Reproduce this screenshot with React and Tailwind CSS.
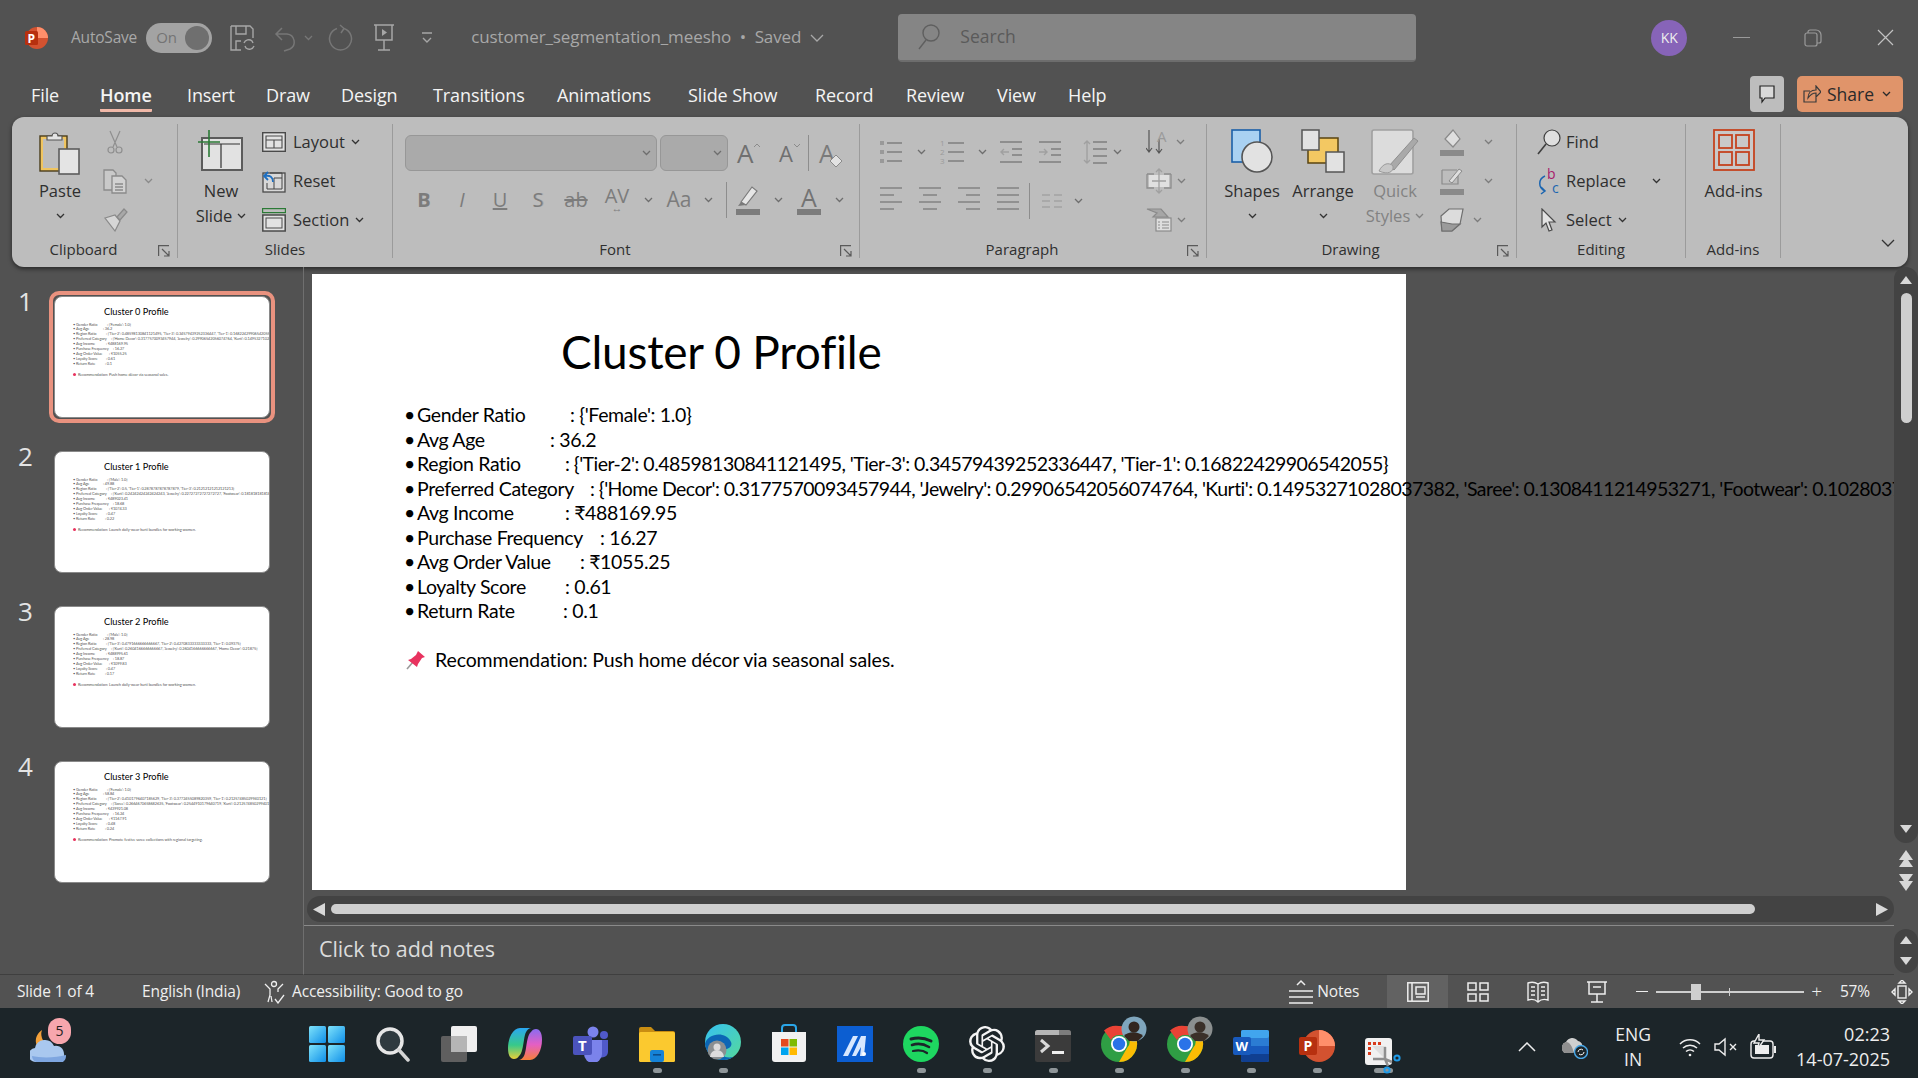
import React from 'react';
import { SiOpenai } from 'react-icons/si';

const UI = { fontFamily: '"Open Sans", "Noto Sans", sans-serif' };
const SLIDE_FONT = { fontFamily: 'Lato, "Noto Sans", sans-serif' };

const Chev = ({ className = 'stroke-[#4a4a4a]' }) => (
  <svg width="9" height="6" viewBox="0 0 9 6" fill="none" strokeWidth="1.3" className={`shrink-0 ${className}`}>
    <path d="M1 1l3.5 3.5L8 1" />
  </svg>
);

const Launcher = () => (
  <svg width="12" height="12" viewBox="0 0 12 12" fill="none" strokeWidth="1.2" className="absolute right-[7px] bottom-[1px] stroke-[#5a5a5a]">
    <path d="M.6 11V.6H11M4 4l7 7M11 6v5H6" />
  </svg>
);

// --- ribbon icons ---
const PasteIcon = () => (
  <svg width="42" height="46" viewBox="0 0 42 46">
    <rect x="1" y="7" width="27" height="35" fill="#f0c560" stroke="#4a3d1c" strokeWidth="1.4" />
    <rect x="4" y="10" width="21" height="29" fill="#bdbdbd" />
    <path d="M8 11V7h5a3 3 0 016 0h4v4z" fill="#e4e4e4" stroke="#555" strokeWidth="1.2" />
    <rect x="20" y="20" width="20" height="25" fill="#e4e4e4" stroke="#5c5c5c" strokeWidth="1.6" />
  </svg>
);
const CutIcon = () => (
  <svg width="18" height="24" viewBox="0 0 18 24" fill="none" stroke="#8f8f8f" strokeWidth="1.2">
    <path d="M4 1l7 16M14 1L7 17" />
    <circle cx="5" cy="20" r="3" /><circle cx="13" cy="20" r="3" />
  </svg>
);
const CopyIcon = () => (
  <svg width="25" height="25" viewBox="0 0 25 25" fill="#c9c9c9" stroke="#8a8a8a" strokeWidth="1.3">
    <path d="M1 1h9l3 3v17H1z" />
    <path d="M9 7h10l4 4v13H9z" fill="#d2d2d2" />
    <path d="M12 15h8M12 18h8M12 21h8" />
  </svg>
);
const BrushIcon = () => (
  <svg width="25" height="24" viewBox="0 0 25 24" fill="#d6d6d6" stroke="#8a8a8a" strokeWidth="1.2">
    <path d="M2 10l10-3 5 6-5 10z" />
    <path d="M14 9l7-8 3 3-7 8z" fill="#a8a8a8" />
  </svg>
);
const NewSlideIcon = () => (
  <svg width="46" height="42" viewBox="0 0 46 42">
    <rect x="4" y="9" width="40" height="32" fill="#e2e2e2" stroke="#5c5c5c" strokeWidth="2" />
    <path d="M6 15h36M23 15v24" stroke="#333" strokeWidth="1.2" fill="none" />
    <path d="M0 13h22M11 1v27" stroke="#2b7a36" strokeWidth="1.6" fill="none" />
  </svg>
);
const LayoutIcon = () => (
  <svg width="24" height="20" viewBox="0 0 24 20" fill="#e2e2e2" stroke="#4a4a4a">
    <rect x=".7" y=".7" width="22.6" height="18.6" strokeWidth="1.4" />
    <path d="M4 4h16v12H4zM4 8h16M12 8v8" fill="none" strokeWidth="1.1" />
  </svg>
);
const ResetIcon = () => (
  <svg width="24" height="24" viewBox="0 0 24 24">
    <rect x="1" y="4" width="22" height="19" fill="#d8d8d8" stroke="#4a4a4a" strokeWidth="1.3" />
    <path d="M8 4h12v16H5v-6M12 9h8M12 9v11" fill="none" stroke="#444" strokeWidth="1" />
    <path d="M11 13c0-5-3-7-8-6M6 3L2 7l4 4" fill="none" stroke="#1f6fc0" strokeWidth="1.8" />
  </svg>
);
const SectionIcon = () => (
  <svg width="24" height="24" viewBox="0 0 24 24" fill="none">
    <rect x=".6" y=".6" width="22.8" height="4" stroke="#2b7a36" strokeWidth="1.2" />
    <rect x=".8" y="7" width="22.4" height="16" fill="#e2e2e2" stroke="#4a4a4a" strokeWidth="1.5" />
    <rect x="4" y="10" width="16" height="10" stroke="#4a4a4a" strokeWidth="1" />
  </svg>
);
const GrowA = ({ down }) => (
  <span className="flex items-start text-[#707070]">
    <span className={`${down ? 'text-[22px]' : 'text-[26px]'} leading-[28px]`}>A</span>
    <svg width="8" height="5" viewBox="0 0 8 5" fill="none" stroke="#8b8b8b" className="mt-[4px]">
      <path d={down ? 'M1 1l3 3 3-3' : 'M1 4l3-3 3 3'} />
    </svg>
  </span>
);
const ClearIcon = () => (
  <span className="flex items-end text-[#7a7a7a] text-[25px] leading-[28px]">
    A
    <svg width="14" height="14" viewBox="0 0 14 14" className="-ml-[6px]">
      <path d="M1 8l6-6 6 6-6 6z" fill="#e2e2e2" stroke="#8a8a8a" />
    </svg>
  </span>
);
const HighlightIcon = () => (
  <svg width="24" height="30" viewBox="0 0 24 30">
    <path d="M5 17L16 2l5 4-11 14z" fill="#e6e6e6" stroke="#7a7a7a" strokeWidth="1.2" />
    <path d="M2 21l3-4 5 3z" fill="#7a7a7a" />
    <rect y="24" width="24" height="6" fill="#7c7c7c" />
  </svg>
);
const FontColorIcon = () => (
  <span className="flex flex-col items-center text-[#737373] text-[25px] leading-[24px]">
    A
    <span className="w-[24px] h-[6px] bg-[#7c7c7c]" />
  </span>
);
const Lines = ({ rows, w = 22, stroke = '#7f7f7f' }) => (
  <svg width={w} height={rows.length * 7 + 2} viewBox={`0 0 ${w} ${rows.length * 7 + 2}`} fill="none" stroke={stroke} strokeWidth="1.4">
    {rows.map(([a, b], i) => <path key={i} d={`M${a} ${i * 7 + 2}H${b}`} />)}
  </svg>
);
const BulletsIcon = () => (
  <svg width="22" height="24" viewBox="0 0 22 24" fill="none" stroke="#7f7f7f" strokeWidth="1.4">
    <path d="M0 3h4M0 12h4M0 21h4" strokeWidth="4" stroke="#999" />
    <path d="M7 3h15M7 12h15M7 21h15" />
  </svg>
);
const NumbersIcon = () => (
  <svg width="24" height="26" viewBox="0 0 24 26" fill="none" stroke="#7f7f7f" strokeWidth="1.4">
    <path d="M8 4h16M8 13h16M8 22h16" />
    <text x="0" y="7" fontSize="8" fill="#9a9a9a" stroke="none">1</text>
    <text x="0" y="16" fontSize="8" fill="#9a9a9a" stroke="none">2</text>
    <text x="0" y="25" fontSize="8" fill="#9a9a9a" stroke="none">3</text>
  </svg>
);
const IndentIcon = ({ out }) => (
  <svg width="22" height="24" viewBox="0 0 22 24" fill="none" stroke="#7f7f7f" strokeWidth="1.4">
    <path d="M0 2h22M12 9h10M12 15h10M0 22h22" />
    <path d={out ? 'M9 12H1m3-3l-3 3 3 3' : 'M0 12h8m-3-3l3 3-3 3'} stroke="#a0a0a0" />
  </svg>
);
const SpacingIcon = () => (
  <svg width="24" height="26" viewBox="0 0 24 26" fill="none" stroke="#7f7f7f" strokeWidth="1.4">
    <path d="M10 3h14M10 10h14M10 17h14M10 24h14" />
    <path d="M4 2v22M1 5l3-3 3 3M1 21l3 3 3-3" stroke="#a0a0a0" />
  </svg>
);
const TextDirIcon = () => (
  <svg width="24" height="26" viewBox="0 0 24 26" fill="none" stroke="#8a8a8a" strokeWidth="1.2">
    <path d="M3 1v22M0 19l3 4 3-4M13 10v14M10 20l3 4 3-4" stroke="#555" />
    <text x="11" y="13" fontSize="15" fill="#9a9a9a" stroke="none">A</text>
  </svg>
);
const AlignTextIcon = () => (
  <svg width="26" height="26" viewBox="0 0 26 26" fill="none">
    <path d="M1 6h7M18 6h7M1 6v14h7M25 6v14h-7" stroke="#8d8d8d" strokeWidth="1.3" />
    <rect x="3" y="7" width="20" height="12" fill="#e0e0e0" />
    <path d="M6 13h14M13 1v24M10 4l3-3 3 3M10 22l3 3 3-3" stroke="#a0a0a0" strokeWidth="1.3" />
  </svg>
);
const ColumnsIcon = () => (
  <svg width="20" height="14" viewBox="0 0 20 14" stroke="#a3a3a3" strokeWidth="1.3" fill="none">
    <path d="M0 1h8M12 1h8M0 7h8M12 7h8M0 13h8M12 13h8" />
  </svg>
);
const SmartArtIcon = () => (
  <svg width="26" height="24" viewBox="0 0 26 24" fill="none" stroke="#8a8a8a" strokeWidth="1.2">
    <path d="M1 1h14l7 8H7l4-4z" fill="#a6a6a6" />
    <rect x="10" y="10" width="15" height="13" fill="#dedede" />
    <path d="M12 14h2M16 14h7M12 17h2M16 17h7M12 20h2M16 20h7" />
  </svg>
);
const ShapesIcon = () => (
  <svg width="42" height="44" viewBox="0 0 42 44">
    <rect x="1" y="1" width="28" height="32" fill="#a9d1f2" stroke="#1b5fa8" strokeWidth="1.6" />
    <ellipse cx="26" cy="28" rx="15" ry="15" fill="#e2e2e2" stroke="#555" strokeWidth="1.6" />
  </svg>
);
const ArrangeIcon = () => (
  <svg width="44" height="44" viewBox="0 0 44 44" stroke="#555" strokeWidth="1.5">
    <rect x="7" y="9" width="30" height="25" fill="#f3c862" stroke="#5a4410" />
    <rect x="1" y="1" width="17" height="20" fill="#e2e2e2" />
    <rect x="25" y="23" width="18" height="20" fill="#e2e2e2" />
  </svg>
);
const QuickStylesIcon = () => (
  <svg width="48" height="48" viewBox="0 0 48 48" fill="none">
    <rect x="1" y="1" width="41" height="44" rx="2" fill="#dcdcdc" stroke="#a0a0a0" strokeWidth="1.6" />
    <path d="M18 37L43 9l4 3-24 29z" fill="#a9a9a9" stroke="#8f8f8f" />
    <path d="M8 42c4-8 10-9 14-5 1 6-5 9-14 5z" fill="#c8c8c8" stroke="#9a9a9a" />
  </svg>
);
const FillIcon = () => (
  <svg width="24" height="28" viewBox="0 0 24 28">
    <path d="M5 11l8-9 7 9-7 8z" fill="#dedede" stroke="#8a8a8a" strokeWidth="1.2" />
    <rect y="22" width="24" height="6" fill="#8a8a8a" />
  </svg>
);
const OutlineIcon = () => (
  <svg width="24" height="28" viewBox="0 0 24 28">
    <path d="M2 3h15M2 3v14h16V8" fill="none" stroke="#8a8a8a" strokeWidth="1.2" />
    <path d="M9 14L19 2l3 2-10 12z" fill="#dedede" stroke="#8a8a8a" />
    <rect y="22" width="24" height="6" fill="#8a8a8a" />
  </svg>
);
const EffectsIcon = () => (
  <svg width="24" height="24" viewBox="0 0 24 24" stroke="#6e6e6e" strokeWidth="1.2">
    <path d="M1 8l8-7h14l-3 15-8 7H2z" fill="#dcdcdc" />
    <path d="M1 14l11 2 8 0-8 7H2z" fill="#9b9b9b" />
  </svg>
);
const FindIcon = () => (
  <svg width="24" height="26" viewBox="0 0 24 26" fill="none" stroke="#3f3f3f" strokeWidth="1.2">
    <circle cx="15" cy="9" r="8" fill="#dfdfdf" />
    <path d="M9 15L1 25" strokeWidth="1.6" />
  </svg>
);
const ReplaceIcon = () => (
  <svg width="24" height="28" viewBox="0 0 24 28" fill="none">
    <text x="10" y="12" fontSize="14" fill="#a81a6b">b</text>
    <text x="15" y="26" fontSize="14" fill="#1b65b0">c</text>
    <path d="M8 9C1 12 1 21 8 24M4 20l4 4-4 3" stroke="#1b65b0" strokeWidth="1.5" />
  </svg>
);
const SelectIcon = () => (
  <svg width="18" height="24" viewBox="0 0 18 24">
    <path d="M2 1v18l4-4 3 8 3-1-3-8h6z" fill="#e2e2e2" stroke="#4a4a4a" strokeWidth="1.2" />
  </svg>
);
const AddInsIcon = () => (
  <svg width="42" height="42" viewBox="0 0 42 42" fill="none" stroke="#c5431f" strokeWidth="1.8">
    <rect x="1" y="1" width="40" height="40" fill="#c9c9c9" />
    <rect x="6" y="6" width="13" height="13" />
    <rect x="23" y="6" width="13" height="13" />
    <rect x="6" y="23" width="13" height="13" />
    <rect x="23" y="23" width="13" height="13" />
  </svg>
);

// --- title bar icons ---
const PptLogo = () => (
  <svg width="24" height="26" viewBox="0 0 24 26">
    <circle cx="13" cy="13" r="11" fill="#d35230" />
    <path d="M13 2a11 11 0 0111 11H13z" fill="#ff8f6b" />
    <rect x="1" y="6" width="13" height="14" rx="1.5" fill="#b7300f" />
    <text x="3.5" y="17.5" fontSize="12" fontWeight="700" fill="#fff" fontFamily="Open Sans">P</text>
  </svg>
);
const SaveSyncIcon = () => (
  <svg width="26" height="26" viewBox="0 0 26 26" fill="none" stroke="#a6a6a6" strokeWidth="1.4">
    <path d="M1 1h19l3 3v9M1 1v24h10M6 1v8h10V1M6 25v-9h5" />
    <path d="M14 18a5 5 0 018-2l1 2M24 21a5 5 0 01-8 2l-1-2" />
  </svg>
);
const UndoIcon = () => (
  <svg width="24" height="28" viewBox="0 0 24 28" fill="none" stroke="#777" strokeWidth="1.5">
    <path d="M2 10h11a8 8 0 013 15l-6 2M8 4l-6 6 6 6" />
  </svg>
);
const RedoIcon = () => (
  <svg width="26" height="28" viewBox="0 0 26 28" fill="none" stroke="#777" strokeWidth="1.5">
    <path d="M16 4.500a11 11 0 11-7 0M16 4.500l-4-3.500M16 4.500l-3 4.500" />
  </svg>
);
const PresentIcon = () => (
  <svg width="22" height="28" viewBox="0 0 22 28" fill="none" stroke="#a6a6a6" strokeWidth="1.5">
    <path d="M1 1h20M3 1v15h16V1M11 16v10M5 26h12" />
    <path d="M9 5l5 3.5L9 12z" fill="#a6a6a6" stroke="none" />
  </svg>
);

// --- status bar icons ---
const AccessIcon = () => (
  <svg width="22" height="24" viewBox="0 0 22 24" fill="none" stroke="#eee" strokeWidth="1.3">
    <circle cx="10" cy="4" r="2.5" />
    <path d="M1 4l5 5v6l-2 7M19 4l-5 5v3M8 22l-1-6M11 19l3 4 6-8" />
  </svg>
);
const NotesIcon = () => (
  <svg width="24" height="26" viewBox="0 0 24 26" fill="none" stroke="#eee" strokeWidth="1.5">
    <path d="M8 6l4-4 4 4M0 12h24M0 18h24M0 24h24" />
  </svg>
);
const NormalViewIcon = () => (
  <svg width="22" height="20" viewBox="0 0 22 20" fill="none" stroke="#eee" strokeWidth="1.5">
    <rect x=".8" y=".8" width="20.4" height="18.4" />
    <path d="M5 1v18M9 5h9v7H9zM9 15h9" />
  </svg>
);
const SorterIcon = () => (
  <svg width="22" height="20" viewBox="0 0 22 20" fill="none" stroke="#eee" strokeWidth="1.5">
    <rect x="1" y="1" width="8" height="7" /><rect x="13" y="1" width="8" height="7" />
    <rect x="1" y="12" width="8" height="7" /><rect x="13" y="12" width="8" height="7" />
  </svg>
);
const ReadingIcon = () => (
  <svg width="22" height="22" viewBox="0 0 22 22" fill="none" stroke="#eee" strokeWidth="1.4">
    <path d="M11 3C8 1 4 1 1 2v17c3-1 7-1 10 2 3-3 7-3 10-2V2c-3-1-7-1-10 1zM11 3v18M4 6h4M4 10h4M4 14h4M14 6h4M14 10h4M14 14h4" />
  </svg>
);
const ShowIcon = () => (
  <svg width="20" height="22" viewBox="0 0 20 22" fill="none" stroke="#eee" strokeWidth="1.5">
    <path d="M0 1h20M2 1v12h16V1M10 13v8M4 21h12M6 6h8" />
  </svg>
);
const FitIcon = () => (
  <svg width="22" height="24" viewBox="0 0 22 24" fill="none" stroke="#eee" strokeWidth="1.4">
    <rect x="7" y="6" width="8" height="12" />
    <path d="M11 0l-3 3h6zM11 24l-3-3h6zM1 12l3-3v6zM21 12l-3-3v6z" />
  </svg>
);

// --- taskbar icons ---
const Weather = () => (
  <svg width="42" height="44" viewBox="0 0 42 44">
    <path d="M12 8a12 12 0 0010 16l-8 6C4 26 3 14 12 8z" fill="#f4a13a" />
    <path d="M6 40a7 7 0 01-1-14 10 10 0 0119-2 8 8 0 0110 8 8 8 0 01-2 8z" fill="#a9c8ef" />
    <path d="M6 40a7 7 0 01-4-6c8 2 24 2 34-1a8 8 0 01-3 7z" fill="#7ea6e0" />
  </svg>
);
const WinIcon = () => (
  <svg width="36" height="36" viewBox="0 0 36 36">
    <defs>
      <linearGradient id="win" x1="0" y1="0" x2="1" y2="1">
        <stop offset="0" stopColor="#7fe3fb" /><stop offset="1" stopColor="#0f8fe8" />
      </linearGradient>
    </defs>
    <rect width="17" height="17" x="0" y="0" rx="1.5" fill="url(#win)" />
    <rect width="17" height="17" x="19" y="0" rx="1.5" fill="url(#win)" />
    <rect width="17" height="17" x="0" y="19" rx="1.5" fill="url(#win)" />
    <rect width="17" height="17" x="19" y="19" rx="1.5" fill="url(#win)" />
  </svg>
);
const SearchTask = () => (
  <svg width="36" height="36" viewBox="0 0 36 36" fill="none">
    <circle cx="15" cy="15" r="12" stroke="#e6e6e6" strokeWidth="3.5" fill="#2f3a3f" />
    <path d="M24 24l9 10" stroke="#d5d5d5" strokeWidth="3.5" strokeLinecap="round" />
  </svg>
);
const TaskView = () => (
  <svg width="36" height="36" viewBox="0 0 36 36">
    <rect x="0" y="10" width="26" height="26" rx="2" fill="#5f5f5f" />
    <rect x="10" y="0" width="26" height="26" rx="2" fill="#efefef" />
    <rect x="10" y="10" width="16" height="16" fill="#b5b5b5" />
  </svg>
);
const Copilot = () => (
  <svg width="36" height="36" viewBox="0 0 36 36">
    <defs>
      <linearGradient id="cop1" x1="0.5" y1="0" x2="0.5" y2="1">
        <stop offset="0" stopColor="#2aa7f2" /><stop offset="0.55" stopColor="#37c98a" /><stop offset="1" stopColor="#e9d038" />
      </linearGradient>
      <linearGradient id="cop2" x1="0.5" y1="0" x2="0.5" y2="1">
        <stop offset="0" stopColor="#8a6cf0" /><stop offset="0.5" stopColor="#e45fc4" /><stop offset="1" stopColor="#f5803a" />
      </linearGradient>
    </defs>
    <path d="M13 2h11c-5 1-6 6-7 12s-2 14-5 16c-1 2-3 3-5 3-4 0-6-4-6-11C1 12 6 2 13 2z" fill="url(#cop1)" />
    <path d="M23 34H12c5-1 6-6 7-12s2-14 5-16c1-2 3-3 5-3 4 0 6 4 6 11 0 10-5 20-12 20z" fill="url(#cop2)" />
  </svg>
);
const Teams = () => (
  <svg width="36" height="36" viewBox="0 0 36 36">
    <circle cx="20" cy="6" r="5.5" fill="#7b83eb" /><circle cx="31" cy="9" r="4" fill="#5059c9" />
    <path d="M25 14h10v12a6 6 0 01-10 4z" fill="#5059c9" />
    <path d="M11 14h18v14a9 9 0 01-18 0z" fill="#7b83eb" />
    <rect x="0" y="10" width="19" height="19" rx="2" fill="#4b53bc" />
    <text x="5" y="25" fontSize="15" fontWeight="700" fill="#fff" fontFamily="Open Sans">T</text>
  </svg>
);
const Explorer = () => (
  <svg width="36" height="36" viewBox="0 0 36 36">
    <path d="M0 3a2 2 0 012-2h10l4 4h18a2 2 0 012 2v6H0z" fill="#c98e12" />
    <rect y="6" width="36" height="30" rx="1.5" fill="#fbc92f" />
    <rect x="11" y="24" width="14" height="12" rx="2" fill="#1583d8" />
    <rect x="14" y="28" width="8" height="1.6" fill="#0c4d8a" />
  </svg>
);
const Edge = () => (
  <svg width="36" height="38" viewBox="0 0 36 38">
    <defs>
      <linearGradient id="edg" x1="0" y1="0" x2="1" y2="1"><stop offset="0" stopColor="#35c1f1" /><stop offset="1" stopColor="#55d99b" /></linearGradient>
    </defs>
    <circle cx="18" cy="18" r="18" fill="url(#edg)" />
    <path d="M0 20c2-10 20-14 26-2 2 5-3 8-10 8-1 4 3 9 12 7a18 18 0 01-28-13z" fill="#0c66b5" />
    <circle cx="12" cy="26" r="9.5" fill="#8a8f91" />
    <circle cx="12" cy="23" r="3.5" fill="#dcdcdc" />
    <path d="M5 33a7 7 0 0114 0z" fill="#dcdcdc" />
  </svg>
);
const Store = () => (
  <svg width="36" height="38" viewBox="0 0 36 38">
    <path d="M11 8V4a3 3 0 013-3h8a3 3 0 013 3v4" fill="none" stroke="#2aa6e8" strokeWidth="2" />
    <path d="M1 8h34v27a3 3 0 01-3 3H4a3 3 0 01-3-3z" fill="#f1f1f1" />
    <rect x="10" y="15" width="7.5" height="7.5" fill="#e5491f" /><rect x="18.5" y="15" width="7.5" height="7.5" fill="#7fba00" />
    <rect x="10" y="23.5" width="7.5" height="7.5" fill="#00a4ef" /><rect x="18.5" y="23.5" width="7.5" height="7.5" fill="#ffb900" />
  </svg>
);
const MApp = () => (
  <svg width="36" height="36" viewBox="0 0 36 36">
    <rect width="36" height="36" fill="#0c5ed1" />
    <path d="M6 30L16 10h5L11 30zM15 30l9-20h5l-2 20h-4l1-9-5 9z" fill="#d8e8ff" />
    <circle cx="27" cy="28" r="2" fill="#fff" />
  </svg>
);
const Spotify = () => (
  <svg width="36" height="36" viewBox="0 0 36 36" fill="none" stroke="#1c2529" strokeLinecap="round">
    <circle cx="18" cy="18" r="18" fill="#1ed760" stroke="none" />
    <path d="M8 13c7-2 14-1 20 2" strokeWidth="3" />
    <path d="M9 19c6-2 12-1 17 2" strokeWidth="2.6" />
    <path d="M10 25c5-1 10-1 14 2" strokeWidth="2.2" />
  </svg>
);
const Terminal = () => (
  <svg width="36" height="32" viewBox="0 0 36 32">
    <rect width="36" height="32" rx="2.5" fill="#3b3b3b" />
    <path d="M0 2.5A2.5 2.5 0 012.5 0H24v5H0z" fill="#b5b5b5" /><path d="M24 0h9.5A2.5 2.5 0 0136 2.500V5H24z" fill="#7d7d7d" />
    <path d="M6 10l7 6-7 6" stroke="#d8d8d8" strokeWidth="3" fill="none" />
    <rect x="17" y="21" width="12" height="3" fill="#eee" />
  </svg>
);
const Chrome = ({ avatar, avatarDark }) => (
  <svg width="46" height="46" viewBox="0 0 46 46">
    <g transform="translate(0 10)">
      <circle cx="18" cy="18" r="18" fill="#2f9e44" />
      <path d="M18 0a18 18 0 0115.6 9H18a9 9 0 00-8 5L3 4.500A18 18 0 0118 0z" fill="#ea4335" />
      <path d="M33.600 9A18 18 0 0118 36l8-14a9 9 0 000-13z" fill="#fbbc04" />
      <circle cx="18" cy="18" r="8" fill="#fff" />
      <circle cx="18" cy="18" r="6.200" fill="#2a73e8" />
    </g>
    <circle cx="33" cy="13" r="12.500" fill={avatar} />
    <circle cx="33" cy="11" r="5.500" fill={avatarDark} />
    <path d="M23 20c4-5 14-5 19 0l-5 5h-9z" fill={avatarDark} />
  </svg>
);
const Word = () => (
  <svg width="36" height="32" viewBox="0 0 36 32">
    <rect x="8" width="28" height="32" rx="2" fill="#2b7cd3" />
    <rect x="8" width="28" height="8" rx="2" fill="#41a5ee" />
    <rect x="8" y="16" width="28" height="8" fill="#185abd" />
    <path d="M8 24h28v6a2 2 0 01-2 2H10a2 2 0 01-2-2z" fill="#103f91" />
    <rect y="7" width="18" height="18" rx="2" fill="#185abd" />
    <text x="2.500" y="21" fontSize="13" fontWeight="700" fill="#fff" fontFamily="Open Sans">W</text>
  </svg>
);
const PptTask = () => (
  <svg width="36" height="32" viewBox="0 0 36 32">
    <circle cx="20" cy="16" r="16" fill="#d35230" />
    <path d="M20 0a16 16 0 0116 16H20z" fill="#ff8f6b" />
    <rect y="7" width="18" height="18" rx="2" fill="#b7300f" />
    <text x="4.500" y="21" fontSize="14" fontWeight="700" fill="#fff" fontFamily="Open Sans">P</text>
  </svg>
);
const Snip = () => (
  <svg width="38" height="38" viewBox="0 0 38 38" className="translate-y-[13px] relative z-10">
    <rect x="1" y="1" width="27" height="27" rx="3" fill="#f1f1f1" />
    <path d="M4 5h3v3H4zM9 5h3v3H9zM14 5h3v3h-3zM4 10h3v3H4zM4 15h3v3H4z" fill="#d83b1c" />
    <path d="M8 9h14v14" fill="#dfdfdf" />
    <path d="M9 22h12l7 3M21 10v12l3 7" stroke="#8f8f8f" strokeWidth="2.500" fill="none" />
    <circle cx="33" cy="21" r="2.600" fill="none" stroke="#1f9be8" strokeWidth="2" />
    <circle cx="23" cy="33" r="2.600" fill="none" stroke="#1f9be8" strokeWidth="2" />
  </svg>
);

// --- tray ---
const Wifi = () => (
  <svg width="22" height="20" viewBox="0 0 22 20" fill="none" stroke="#eee" strokeWidth="1.5">
    <path d="M1 7a14 14 0 0120 0M4 11a10 10 0 0114 0M7 14.500a6 6 0 018 0" />
    <circle cx="11" cy="18" r="1.300" fill="#eee" stroke="none" />
  </svg>
);
const Mute = () => (
  <svg width="24" height="20" viewBox="0 0 24 20" fill="none" stroke="#eee" strokeWidth="1.400">
    <path d="M1 7h4l6-5v16l-6-5H1zM16 7l6 6M22 7l-6 6" />
  </svg>
);
const Battery = () => (
  <svg width="28" height="26" viewBox="0 0 28 26" fill="none" stroke="#eee" strokeWidth="1.400">
    <rect x="1" y="7" width="22" height="17" rx="3" />
    <path d="M25 12v7" strokeWidth="2" />
    <rect x="5" y="11" width="14" height="9" fill="#eee" stroke="none" />
    <path d="M9 0L4 9h5l-2 7 7-10H9z" fill="#1c2529" />
  </svg>
);
const CloudSync = () => (
  <svg width="26" height="24" viewBox="0 0 26 24">
    <path d="M3 18a6 6 0 011-11 7 7 0 0112-1 6 6 0 013 10z" fill="#cfcfcf" />
    <path d="M3 18a6 6 0 011-11c4 0 6 4 8 11z" fill="#8f8f8f" />
    <circle cx="19" cy="17" r="6.500" fill="#1c2529" stroke="#4aa8e8" strokeWidth="1.400" />
    <path d="M16 17a3 3 0 015-2M22 17a3 3 0 01-5 2" stroke="#fff" fill="none" />
  </svg>
);

// --- slides ---
const rows = (gender, age, region, cat, income, freq, order, loyal, ret) => [
  ['Gender Ratio', 'w-[153px]', 'w-[31px]', `{'${gender}': 1.0}`],
  ['Avg Age', 'w-[133px]', 'w-[27px]', age],
  ['Region Ratio', 'w-[148px]', 'w-[30px]', region],
  ['Preferred Category', 'w-[173px]', 'w-[35px]', cat],
  ['Avg Income', 'w-[148px]', 'w-[30px]', income],
  ['Purchase Frequency', 'w-[183px]', 'w-[37px]', freq],
  ['Avg Order Value', 'w-[163px]', 'w-[33px]', order],
  ['Loyalty Score', 'w-[148px]', 'w-[30px]', loyal],
  ['Return Rate', 'w-[146px]', 'w-[29px]', ret],
];

const slides = [
  {
    title: 'Cluster 0 Profile',
    rows: rows('Female', '36.2', "{'Tier-2': 0.48598130841121495, 'Tier-3': 0.34579439252336447, 'Tier-1': 0.16822429906542055}", "{'Home Decor': 0.3177570093457944, 'Jewelry': 0.29906542056074764, 'Kurti': 0.14953271028037382, 'Saree': 0.1308411214953271, 'Footwear': 0.10280373831775701}", '₹488169.95', '16.27', '₹1055.25', '0.61', '0.1'),
    rec: 'Recommendation: Push home décor via seasonal sales.',
  },
  {
    title: 'Cluster 1 Profile',
    rows: rows('Male', '49.88', "{'Tier-2': 0.5, 'Tier-1': 0.2878787878787879, 'Tier-3': 0.21212121212121213}", "{'Kurti': 0.24242424242424243, 'Jewelry': 0.22727272727272727, 'Footwear': 0.18181818181818182}", '₹489023.41', '18.68', '₹1074.33', '0.47', '0.22'),
    rec: 'Recommendation: Launch daily-wear kurti bundles for working women.',
  },
  {
    title: 'Cluster 2 Profile',
    rows: rows('Male', '28.98', "{'Tier-3': 0.4791666666666667, 'Tier-2': 0.4270833333333333, 'Tier-1': 0.09375}", "{'Kurti': 0.2604166666666667, 'Jewelry': 0.2604166666666667, 'Home Decor': 0.21875}", '₹488995.61', '18.87', '₹1099.83', '0.47', '0.17'),
    rec: 'Recommendation: Launch daily-wear kurti bundles for working women.',
  },
  {
    title: 'Cluster 3 Profile',
    rows: rows('Female', '58.84', "{'Tier-2': 0.4101796407185629, 'Tier-3': 0.3772455089820359, 'Tier-1': 0.21257485029940121}", "{'Saree': 0.2664670658682635, 'Footwear': 0.2544910179640719, 'Kurti': 0.2125748502994012}", '₹439921.08', '16.24', '₹1167.91', '0.48', '0.24'),
    rec: 'Recommendation: Promote festive saree collections with regional targeting.',
  },
];

const Pin = ({ size = 20 }) => (
  <svg width={size} height={size} viewBox="0 0 20 20" className="shrink-0">
    <path d="M1 19l6-7" stroke="#9a9a9a" strokeWidth="1.600" />
    <path d="M12 1l7 6-3 1-4 6-1 3-9-7 3-1 5-4z" fill="#e8335f" />
  </svg>
);

const Thumb = ({ slide, n, active }) => (
  <div className="flex items-center h-[155px] shrink-0">
    <div className="w-[49px] pl-[18px] text-[26px] leading-none text-[#e4e4e4] -mt-[112px]" style={UI}>{n}</div>
    <div className={`rounded-[10px] ${active ? 'border-[4px] border-[#e9927f] p-[1px]' : 'p-[5px]'}`}>
      <div className="w-[216px] h-[122px] rounded-[8px] bg-white border border-[#8a8a8a] overflow-hidden text-[#555] whitespace-nowrap" style={SLIDE_FONT}>
        <div className="pl-[49px] pt-[9px] text-[9.2px] leading-[12px] text-black">{slide.title}</div>
        <div className="pl-[18px] pt-[5px] text-[3.9px] leading-[4.9px] tracking-[-0.1px]">
          {slide.rows.map(([label, , w2, value]) => (
            <div key={label} className="flex">
              <span className="w-[3px] shrink-0">•</span>
              <span className={`${w2} shrink-0`}>{label}</span>
              <span>: {value}</span>
            </div>
          ))}
        </div>
        <div className="pl-[18px] pt-[5px] text-[3.9px] leading-[5px] flex items-center gap-[2px] tracking-[-0.05px]">
          <span className="w-[3px] h-[3px] rounded-full bg-[#e8335f]" />{slide.rec}
        </div>
      </div>
    </div>
  </div>
);

const Slide = ({ slide }) => (
  <div className="w-[1094px] h-[616px] bg-white shrink-0 text-black whitespace-nowrap" style={SLIDE_FONT}>
    <div className="pl-[249px] pt-[50px] text-[46px] leading-[56px] tracking-[-0.25px]">{slide.title}</div>
    <div className="pl-[92px] pt-[23px] text-[19.5px] leading-[24.5px] tracking-[-0.35px]">
      {slide.rows.map(([label, w1, , value]) => (
        <div key={label} className="flex">
          <span className="w-[13px] shrink-0">•</span>
          <span className={`${w1} shrink-0`}>{label}</span>
          <span className={value.length > 40 ? 'tracking-[-0.53px]' : ''}>: {value}</span>
        </div>
      ))}
    </div>
    <div className="pl-[94px] pt-[24px] text-[19.5px] leading-[24.5px] tracking-[-0.12px] flex items-center gap-[9px]">
      <Pin />{slide.rec}
    </div>
  </div>
);

// --- ribbon parts ---
const Group = ({ w, label, launcher, children }) => (
  <div className={`${w} h-[134px] shrink-0 relative border-r border-[#9b9b9b] flex flex-col`}>
    <div className="h-[120px] flex">{children}</div>
    <div className={`h-[18px] leading-[18px] text-center text-[15px] text-[#2f2f2f] ${launcher ? 'pr-[22px]' : ''}`}>{label}</div>
    {launcher && <Launcher />}
  </div>
);

const BigBtn = ({ icon, lines, chev, w, dim, h = 'h-[54px]' }) => (
  <div className={`${w} shrink-0 flex flex-col items-center text-[16.5px] leading-[25px] ${dim ? 'text-[#828282]' : 'text-[#2f2f2f]'}`}>
    <div className={`${h} pt-[5px] flex items-start justify-center`}>{icon}</div>
    {lines.map((l, i) => (
      <div key={l} className="flex items-center gap-[5px]">
        {l}
        {chev && i === lines.length - 1 && <Chev className={dim ? 'stroke-[#828282]' : 'stroke-[#333]'} />}
      </div>
    ))}
  </div>
);

const BelowChev = ({ dim }) => (
  <div className="h-[25px] flex items-center"><Chev className={dim ? 'stroke-[#828282]' : 'stroke-[#333]'} /></div>
);

const SmallBtn = ({ icon, label, chev, iconW = 'w-[30px]' }) => (
  <div className="h-[36px] flex items-center text-[16.5px] text-[#2f2f2f]">
    <div className={`${iconW} flex justify-center shrink-0`}>{icon}</div>
    {label && <span className="ml-[4px]">{label}</span>}
    {chev && <span className="ml-[6px]"><Chev className="stroke-[#333]" /></span>}
  </div>
);

const Sep = () => <div className="w-px h-[36px] bg-[#8d8d8d] shrink-0" />;
const Combo = ({ w }) => (
  <div className={`${w} h-[36px] shrink-0 rounded-[6px] border border-[#979797] bg-[#aaaaaa] flex items-center justify-end pr-[5px]`}>
    <Chev className="stroke-[#6e6e6e]" />
  </div>
);
const Cell = ({ w, children }) => <div className={`${w} h-[36px] shrink-0 flex items-center justify-center`}>{children}</div>;

const Ribbon = () => (
  <div className="ml-[12px] mr-[10px] h-[150px] rounded-[12px] bg-[#bdbdbd] flex items-start pt-[7px] shadow-[0_2px_4px_rgba(0,0,0,0.5)] shrink-0">
    <Group w="w-[166px]" label="Clipboard" launcher>
      <div className="ml-[22px]">
        <BigBtn w="w-[52px]" icon={<PasteIcon />} lines={['Paste']} />
        <div className="flex justify-center"><BelowChev /></div>
      </div>
      <div className="ml-[14px] flex flex-col gap-[3px]">
        <Cell w="w-[30px]"><CutIcon /></Cell>
        <Cell w="w-[30px]"><CopyIcon /></Cell>
        <Cell w="w-[30px]"><BrushIcon /></Cell>
      </div>
      <div className="ml-[14px] mt-[54px]"><Chev className="stroke-[#8a8a8a]" /></div>
    </Group>

    <Group w="w-[215px]" label="Slides">
      <div className="ml-[12px]">
        <BigBtn w="w-[62px]" icon={<NewSlideIcon />} lines={['New', 'Slide']} chev />
      </div>
      <div className="ml-[7px] flex flex-col gap-[3px]">
        <SmallBtn icon={<LayoutIcon />} label="Layout" chev />
        <SmallBtn icon={<ResetIcon />} label="Reset" />
        <SmallBtn icon={<SectionIcon />} label="Section" chev />
      </div>
    </Group>

    <Group w="w-[467px]" label="Font" launcher>
      <div className="pl-[12px] pt-[11px] flex flex-col gap-[11px]">
        <div className="flex items-center">
          <Combo w="w-[252px]" />
          <div className="w-[3px]" />
          <Combo w="w-[68px]" />
          <div className="ml-[9px] w-[42px]"><GrowA /></div>
          <div className="w-[29px]"><GrowA down /></div>
          <Sep />
          <div className="ml-[10px]"><ClearIcon /></div>
        </div>
        <div className="flex items-center text-[#7c7c7c] text-[20px]">
          <Cell w="w-[38px]"><b>B</b></Cell>
          <Cell w="w-[38px]"><i>I</i></Cell>
          <Cell w="w-[38px]"><u>U</u></Cell>
          <Cell w="w-[38px]"><span className="[text-shadow:1px_0_0_#aaa]">S</span></Cell>
          <Cell w="w-[38px]"><span className="line-through">ab</span></Cell>
          <Cell w="w-[44px]">
            <span className="flex flex-col items-center leading-[16px] text-[20px]">AV<span className="text-[11px] leading-[8px]">↔</span></span>
          </Cell>
          <Cell w="w-[18px]"><Chev className="stroke-[#6e6e6e]" /></Cell>
          <Cell w="w-[44px]"><span className="text-[21px]">Aa</span></Cell>
          <Cell w="w-[14px]"><Chev className="stroke-[#6e6e6e]" /></Cell>
          <div className="ml-[11px]"><Sep /></div>
          <div className="ml-[9px]"><HighlightIcon /></div>
          <Cell w="w-[37px]"><Chev className="stroke-[#6e6e6e]" /></Cell>
          <FontColorIcon />
          <Cell w="w-[36px]"><Chev className="stroke-[#6e6e6e]" /></Cell>
        </div>
      </div>
    </Group>

    <Group w="w-[347px]" label="Paragraph" launcher>
      <div className="pl-[20px] pt-[10px] flex flex-col gap-[13px] w-[286px]">
        <div className="flex items-center h-[36px]">
          <BulletsIcon />
          <Cell w="w-[38px]"><Chev className="stroke-[#6e6e6e]" /></Cell>
          <NumbersIcon />
          <Cell w="w-[36px]"><Chev className="stroke-[#6e6e6e]" /></Cell>
          <IndentIcon out />
          <div className="w-[17px]" />
          <IndentIcon />
          <div className="w-[22px]" />
          <SpacingIcon />
          <Cell w="w-[21px]"><Chev className="stroke-[#6e6e6e]" /></Cell>
        </div>
        <div className="flex items-center h-[36px]">
          <Lines rows={[[0, 22], [0, 14], [0, 22], [0, 14]]} />
          <div className="w-[17px]" />
          <Lines rows={[[0, 22], [4, 18], [0, 22], [4, 18]]} />
          <div className="w-[17px]" />
          <Lines rows={[[0, 22], [8, 22], [0, 22], [8, 22]]} />
          <div className="w-[17px]" />
          <Lines rows={[[0, 22], [0, 22], [0, 22], [0, 22]]} />
          <div className="w-[10px]" />
          <Sep />
          <div className="ml-[12px]"><ColumnsIcon /></div>
          <Cell w="w-[32px]"><Chev className="stroke-[#6e6e6e]" /></Cell>
        </div>
      </div>
      <div className="flex flex-col gap-[3px]">
        <div className="h-[36px] flex items-center gap-[6px]"><TextDirIcon /><Chev className="stroke-[#7c7c7c]" /></div>
        <div className="h-[36px] flex items-center gap-[5px]"><AlignTextIcon /><Chev className="stroke-[#7c7c7c]" /></div>
        <div className="h-[36px] flex items-center gap-[5px]"><SmartArtIcon /><Chev className="stroke-[#7c7c7c]" /></div>
      </div>
    </Group>

    <Group w="w-[310px]" label="Drawing" launcher>
      <div className="ml-[15px]">
        <BigBtn w="w-[60px]" icon={<ShapesIcon />} lines={['Shapes']} />
        <div className="flex justify-center"><BelowChev /></div>
      </div>
      <div className="ml-[11px]">
        <BigBtn w="w-[60px]" icon={<ArrangeIcon />} lines={['Arrange']} />
        <div className="flex justify-center"><BelowChev /></div>
      </div>
      <div className="ml-[9px]">
        <BigBtn w="w-[66px]" icon={<QuickStylesIcon />} lines={['Quick', 'Styles']} chev dim />
      </div>
      <div className="ml-[12px] flex flex-col gap-[3px]">
        <div className="h-[36px] flex items-center gap-[20px]"><FillIcon /><Chev className="stroke-[#7c7c7c]" /></div>
        <div className="h-[36px] flex items-center gap-[20px]"><OutlineIcon /><Chev className="stroke-[#7c7c7c]" /></div>
        <div className="h-[36px] flex items-center gap-[9px]"><EffectsIcon /><Chev className="stroke-[#7c7c7c]" /></div>
      </div>
    </Group>

    <Group w="w-[169px]" label="Editing">
      <div className="ml-[19px] flex flex-col gap-[3px] w-[150px]">
        <SmallBtn icon={<FindIcon />} label="Find" iconW="w-[26px]" />
        <div className="flex items-center">
          <SmallBtn icon={<ReplaceIcon />} label="Replace" iconW="w-[26px]" />
          <span className="ml-[26px]"><Chev className="stroke-[#333]" /></span>
        </div>
        <SmallBtn icon={<SelectIcon />} label="Select" chev iconW="w-[26px]" />
      </div>
    </Group>

    <Group w="w-[95px]" label="Add-ins">
      <BigBtn w="w-[95px]" icon={<AddInsIcon />} lines={['Add-ins']} />
    </Group>

    <div className="flex-1 h-[134px] flex items-end justify-end pr-[13px] pb-[11px]">
      <svg width="14" height="8" viewBox="0 0 14 8" fill="none" stroke="#333" strokeWidth="1.3"><path d="M1 1l6 6 6-6" /></svg>
    </div>
  </div>
);

const menu = [
  ['File', 'w-[69px]'], ['Home', 'w-[87px]'], ['Insert', 'w-[79px]'], ['Draw', 'w-[75px]'], ['Design', 'w-[92px]'],
  ['Transitions', 'w-[124px]'], ['Animations', 'w-[131px]'], ['Slide Show', 'w-[127px]'], ['Record', 'w-[91px]'],
  ['Review', 'w-[91px]'], ['View', 'w-[71px]'], ['Help', 'w-[60px]'],
];

const TaskIcon = ({ children, dot, wide }) => (
  <div className="w-[66px] shrink-0 flex flex-col items-center">
    <div className="h-[40px] flex items-end justify-center">{children}</div>
    <div className={`${wide ? 'w-[19px]' : 'w-[9px]'} h-[5px] mt-[6px] rounded-full ${dot ? 'bg-[#8f9699]' : ''}`} />
  </div>
);

const ScrollArrow = ({ d, w = 12, h = 9 }) => (
  <svg width={w} height={h} viewBox={`0 0 ${w} ${h}`} className="fill-[#d8d8d8] shrink-0"><path d={d} /></svg>
);

export default function App() {
  return (
    <div className="w-[1918px] h-[1078px] flex flex-col bg-[#525252] overflow-hidden" style={UI}>
      {/* title bar */}
      <div className="h-[75px] flex items-center pl-[24px] shrink-0">
        <PptLogo />
        <span className="ml-[23px] text-[15.5px] text-[#a8a8a8] tracking-[-0.2px]">AutoSave</span>
        <div className="ml-[9px] w-[66px] h-[30px] rounded-full bg-[#a3a3a3] flex items-center justify-between pl-[10px] pr-[3px]">
          <span className="text-[15px] text-[#747474]">On</span>
          <span className="w-[24px] h-[24px] rounded-full bg-[#6f6f6f]" />
        </div>
        <div className="ml-[18px]"><SaveSyncIcon /></div>
        <div className="ml-[18px]"><UndoIcon /></div>
        <div className="ml-[6px]"><Chev className="stroke-[#777]" /></div>
        <div className="ml-[15px]"><RedoIcon /></div>
        <div className="ml-[19px]"><PresentIcon /></div>
        <svg width="12" height="12" viewBox="0 0 12 12" fill="none" stroke="#a6a6a6" strokeWidth="1.400" className="ml-[26px]"><path d="M1 1h10M2 6l4 4 4-4" /></svg>
        <span className="ml-[38px] -mt-[1px] text-[17px] text-[#a8a8a8] tracking-[-0.1px] whitespace-pre">customer_segmentation_meesho  •  Saved</span>
        <svg width="14" height="8" viewBox="0 0 14 8" fill="none" stroke="#a8a8a8" strokeWidth="1.300" className="ml-[9px]"><path d="M1 1l6 6 6-6" /></svg>
        <div className="ml-[74px] w-[518px] h-[48px] rounded-[4px] bg-[#858585] border-b-2 border-[#6d6d6d] flex items-center pl-[20px]">
          <svg width="22" height="26" viewBox="0 0 22 26" fill="none" stroke="#5f5f5f" strokeWidth="1.400"><circle cx="13" cy="9" r="8" /><path d="M8 16L1 25" /></svg>
          <span className="ml-[20px] text-[17.5px] text-[#5a5a5a]">Search</span>
        </div>
        <div className="ml-[235px] w-[36px] h-[36px] rounded-full bg-[#8764b8] flex items-center justify-center text-[14px] text-[#eee]">KK</div>
        <div className="ml-[46px] w-[17px] h-px bg-[#9a9a9a]" />
        <svg width="18" height="18" viewBox="0 0 18 18" fill="none" stroke="#9a9a9a" strokeWidth="1.200" className="ml-[54px]">
          <rect x="1" y="4" width="12" height="13" rx="2" /><path d="M4 4V3a2 2 0 012-2h6a5 5 0 015 5v6a2 2 0 01-2 2h-2" />
        </svg>
        <svg width="17" height="17" viewBox="0 0 17 17" fill="none" stroke="#c2c2c2" strokeWidth="1.200" className="ml-[55px]"><path d="M1 1l15 15M16 1L1 16" /></svg>
      </div>

      {/* menu row */}
      <div className="h-[42px] flex items-start pl-[31px] pr-[15px] shrink-0">
        {menu.map(([m, w]) => (
          <div key={m} className={`${w} shrink-0 h-[42px] pt-[7px] text-[18px] leading-[26px] tracking-[-0.1px] text-[#f4f4f4]`}>
            <span className={`inline-block ${m === 'Home' ? 'font-semibold border-b-[3px] border-[#f0b8a8] pb-[1px] rounded-b-[1px]' : ''}`}>{m}</span>
          </div>
        ))}
        <div className="flex-1" />
        <div className="w-[34px] h-[36px] mt-[1px] rounded-[4px] bg-[#bdbdbd] flex items-center justify-center">
          <svg width="16" height="19" viewBox="0 0 16 19" fill="#d9d9d9" stroke="#222" strokeWidth="1.200"><path d="M1 1h14v12H6l-3 4v-4H1z" /></svg>
        </div>
        <div className="ml-[13px] w-[106px] h-[36px] mt-[1px] rounded-[5px] bg-[#e0946a] flex items-center pl-[6px] text-[#2a2a2a] text-[17.5px]">
          <svg width="18" height="19" viewBox="0 0 18 19" fill="none" stroke="#3a3a3a" strokeWidth="1.200"><path d="M13 9v8H1V6h6M5 13c0-5 3-8 8-8V1l5 6-5 5V8c-4 0-6 2-8 5z" /></svg>
          <span className="ml-[6px]">Share</span>
          <span className="ml-[8px]"><Chev className="stroke-[#2a2a2a]" /></span>
        </div>
      </div>

      <Ribbon />

      {/* work area */}
      <div className="h-[658px] flex shrink-0">
        <div className="w-[304px] shrink-0 border-r border-[#6f6f6f] pt-[12px] flex flex-col">
          {slides.map((s, i) => <Thumb key={s.title} slide={s} n={i + 1} active={i === 0} />)}
        </div>
        <div className="flex-1 min-w-0 flex flex-col">
          <div className="h-[629px] pl-[8px] pt-[7px] overflow-hidden flex">
            <Slide slide={slides[0]} />
          </div>
          <div className="h-[26px] ml-[3px] rounded-full bg-[#434343] flex items-center px-[6px] gap-[6px]">
            <ScrollArrow d="M0 6.500L12 0v13z" h={13} />
            <div className="w-[1424px] h-[10px] rounded-full bg-[#cfcfcf]" />
            <div className="flex-1" />
            <ScrollArrow d="M12 6.500L0 0v13z" h={13} />
          </div>
        </div>
        <div className="w-[24px] shrink-0 flex flex-col items-center">
          <div className="w-[24px] h-[576px] rounded-[12px] bg-[#434343] flex flex-col items-center py-[9px]">
            <ScrollArrow d="M6 0l6 8H0z" />
            <div className="mt-[8px] w-[11px] h-[130px] rounded-full bg-[#cfcfcf]" />
            <div className="flex-1" />
            <ScrollArrow d="M6 8l6-8H0z" />
          </div>
          <div className="mt-[7px] flex flex-col items-center">
            <ScrollArrow d="M7 0l7 10H0z" w={14} h={10} /><div className="-mt-[3px]"><ScrollArrow d="M7 0l7 10H0z" w={14} h={10} /></div>
            <div className="h-[7px]" />
            <ScrollArrow d="M7 10l7-10H0z" w={14} h={10} /><div className="-mt-[3px]"><ScrollArrow d="M7 10l7-10H0z" w={14} h={10} /></div>
          </div>
        </div>
      </div>

      {/* notes */}
      <div className="h-[50px] flex shrink-0">
        <div className="w-[304px] shrink-0 border-r border-[#6f6f6f] border-b border-b-[#3f3f3f]" />
        <div className="flex-1 flex items-center border-t border-t-[#8a8a8a] border-b border-b-[#3f3f3f] pl-[15px] pb-[2px] text-[21.5px] text-[#dcdcdc] tracking-[-0.1px]">Click to add notes</div>
        <div className="w-[24px] mt-[4px] h-[44px] rounded-[12px] bg-[#434343] flex flex-col items-center justify-center gap-[12px]">
          <ScrollArrow d="M6 0l6 8H0z" />
          <ScrollArrow d="M6 8l6-8H0z" />
        </div>
      </div>

      {/* status bar */}
      <div className="h-[33px] flex items-center shrink-0 text-[15.5px] text-[#efefef] tracking-[-0.15px] whitespace-nowrap">
        <span className="ml-[17px]">Slide 1 of 4</span>
        <span className="ml-[48px]">English (India)</span>
        <span className="ml-[24px]"><AccessIcon /></span>
        <span className="ml-[6px]">Accessibility: Good to go</span>
        <div className="flex-1" />
        <NotesIcon />
        <span className="ml-[4px]">Notes</span>
        <div className="ml-[28px] w-[61px] h-[33px] bg-[#626262] flex items-center justify-center"><NormalViewIcon /></div>
        <div className="ml-[19px]"><SorterIcon /></div>
        <div className="ml-[38px]"><ReadingIcon /></div>
        <div className="ml-[38px]"><ShowIcon /></div>
        <div className="ml-[29px] w-[12px] h-px bg-[#eee]" />
        <div className="ml-[8px] w-[148px] h-[2px] bg-[#cfcfcf] flex items-center">
          <span className="ml-[35px] w-[10px] h-[16px] bg-[#cfcfcf]" />
          <span className="ml-[28px] w-px h-[8px] bg-[#cfcfcf]" />
        </div>
        <span className="ml-[7px] text-[19px] leading-none font-light">+</span>
        <span className="ml-[18px]">57%</span>
        <div className="ml-[21px] mr-[5px]"><FitIcon /></div>
      </div>

      {/* taskbar */}
      <div className="h-[70px] bg-[#1c2529] flex items-start pt-[14px] shrink-0">
        <div className="ml-[30px] w-[46px] relative">
          <Weather />
          <span className="absolute -top-[4px] left-[18px] w-[23px] h-[26px] rounded-full bg-[#f7a6ad] text-[#222] text-[14px] leading-[26px] text-center">5</span>
        </div>
        <div className="ml-[218px] flex">
          <TaskIcon><WinIcon /></TaskIcon>
          <TaskIcon><SearchTask /></TaskIcon>
          <TaskIcon><TaskView /></TaskIcon>
          <TaskIcon><Copilot /></TaskIcon>
          <TaskIcon><Teams /></TaskIcon>
          <TaskIcon dot><Explorer /></TaskIcon>
          <TaskIcon dot><Edge /></TaskIcon>
          <TaskIcon><Store /></TaskIcon>
          <TaskIcon><MApp /></TaskIcon>
          <TaskIcon dot><Spotify /></TaskIcon>
          <TaskIcon dot><SiOpenai size={36} className="text-[#f4f4f4]" /></TaskIcon>
          <TaskIcon dot><Terminal /></TaskIcon>
          <TaskIcon dot><span className="ml-[10px] block"><Chrome avatar="#7fa6bd" avatarDark="#33261f" /></span></TaskIcon>
          <TaskIcon dot><span className="ml-[10px] block"><Chrome avatar="#8b8f8f" avatarDark="#3b3029" /></span></TaskIcon>
          <TaskIcon dot><Word /></TaskIcon>
          <TaskIcon dot><PptTask /></TaskIcon>
          <TaskIcon dot wide><Snip /></TaskIcon>
        </div>
        <div className="flex-1 h-[50px] flex items-center justify-end pr-[28px] text-[#eee]">
          <svg width="18" height="10" viewBox="0 0 18 10" fill="none" stroke="#eee" strokeWidth="1.500"><path d="M1 9l8-8 8 8" /></svg>
          <div className="ml-[26px]"><CloudSync /></div>
          <div className="ml-[19px] w-[52px] text-center leading-[25px] text-[17.5px]">ENG<br />IN</div>
          <div className="ml-[20px]"><Wifi /></div>
          <div className="ml-[13px]"><Mute /></div>
          <div className="ml-[12px]"><Battery /></div>
          <div className="ml-[18px] text-right leading-[25px] text-[18px]">02:23<br />14-07-2025</div>
        </div>
      </div>
    </div>
  );
}
